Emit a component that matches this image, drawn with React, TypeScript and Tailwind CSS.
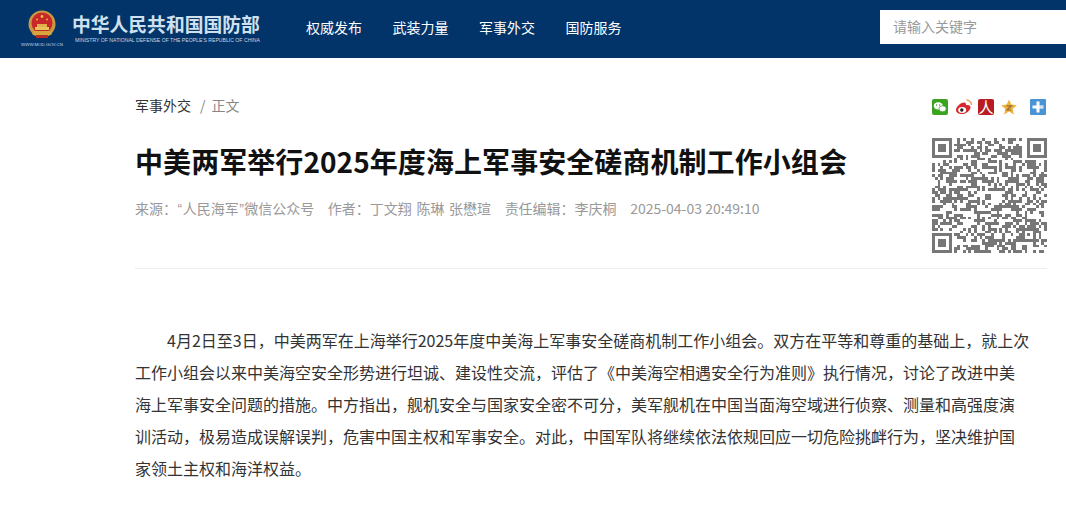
import React from "react"

const cjk = "font-['Noto_Sans_CJK_SC','Noto_Sans',sans-serif]"

const navItems = ["权威发布", "武装力量", "军事外交", "国防服务"]

// 41x41 modules, the three finders and the alignment box are fixed, the rest is filled from a seed
function qrCells() {
  const n = 41
  const cells: { x: number; y: number }[] = []
  let seed = 20250403
  const next = () => {
    seed = (seed * 1103515245 + 12345) & 0x7fffffff
    return (seed >> 16) & 1
  }
  const finder = (x: number, y: number, ox: number, oy: number) => {
    const a = x - ox
    const b = y - oy
    if (a < 0 || b < 0 || a > 7 || b > 7) return -1
    if (a === 7 || b === 7) return 0
    if (a === 0 || a === 6 || b === 0 || b === 6) return 1
    if (a === 1 || a === 5 || b === 1 || b === 5) return 0
    return 1
  }
  for (let y = 0; y < n; y++) {
    for (let x = 0; x < n; x++) {
      const v = next()
      let f = finder(x, y, 0, 0)
      if (f < 0 && x >= 33) f = x === 33 || y === 7 ? (y <= 7 ? 0 : -1) : y <= 6 ? finder(x - 34, y, 0, 0) : -1
      if (f < 0 && y >= 33 && x <= 7) f = y === 33 || x === 7 ? 0 : finder(x, y - 34, 0, 0)
      // alignment box
      if (x >= 32 && x <= 36 && y >= 32 && y <= 36) {
        const edge = x === 32 || x === 36 || y === 32 || y === 36
        f = edge || (x === 34 && y === 34) ? 1 : 0
      }
      // blank patch in the middle
      if (x >= 21 && x <= 24 && y >= 19 && y <= 22) f = 0
      if (f === 1 || (f < 0 && v === 1)) cells.push({ x, y })
    }
  }
  return cells
}

function QrCode() {
  return (
    <svg viewBox="0 0 41 41" className="w-[115px] h-[115px]" shapeRendering="crispEdges">
      {qrCells().map((c) => (
        <rect key={`${c.x}-${c.y}`} x={c.x} y={c.y} width="1" height="1" fill="#777777" />
      ))}
    </svg>
  )
}

function Emblem() {
  return (
    <svg viewBox="0 0 30 30" className="w-[30px] h-[30px]">
      <circle cx="15" cy="14" r="13.5" fill="#c9983f" />
      <circle cx="15" cy="13" r="10.5" fill="#c8282a" />
      <circle cx="15" cy="6.5" r="1.4" fill="#f0c040" />
      <circle cx="10" cy="9.5" r="0.9" fill="#f0c040" />
      <circle cx="20" cy="9.5" r="0.9" fill="#f0c040" />
      <path d="M8 17h14v3H8z" fill="#e9c25a" />
      <path d="M10 14h10v3H10z" fill="#e2b04a" />
      <path d="M5 24c3 3 17 3 20 0l-2-3H7z" fill="#d8a63e" />
      <path d="M9 25h12v3H9z" fill="#b92c24" />
    </svg>
  )
}

function ShareIcons() {
  return (
    <div className="flex items-center h-4 mr-[1px]">
      <svg viewBox="0 0 16 16" className="w-4 h-4">
        <rect width="16" height="16" rx="2" fill="#3aa320" />
        <ellipse cx="6.2" cy="6.8" rx="4.4" ry="3.6" fill="#fff" />
        <ellipse cx="10.6" cy="9.8" rx="3.6" ry="3" fill="#fff" stroke="#3aa320" strokeWidth="0.7" />
        <circle cx="4.6" cy="6" r="0.7" fill="#3aa320" />
        <circle cx="7.6" cy="6" r="0.7" fill="#3aa320" />
      </svg>
      <svg viewBox="0 0 18 16" className="w-[18px] h-4 ml-[7px]">
        <path d="M1 11c0-3 4.500-7.500 8-7.500 2 0 2.300 1.500 2 2.800 2.200-.6 4.500 0 4.500 1.900C15.500 11.500 11 15 7 15 3.500 15 1 13.500 1 11z" fill="#d9282d" />
        <ellipse cx="7.200" cy="11" rx="4" ry="2.900" fill="#fff" />
        <circle cx="6.800" cy="11" r="1.700" fill="#222" />
        <path d="M11.500 1c2.500 0 5 2.200 5 5" fill="none" stroke="#e6a15c" strokeWidth="1.500" />
      </svg>
      <span className="ml-[5px] w-4 h-4 rounded-[2px] bg-[#b81c22] text-white text-[15px] leading-4 text-center">
        人
      </span>
      <svg viewBox="0 0 16 16" className="w-4 h-4 ml-[7px]">
        <polygon points="8,0.500 10.300,5.600 15.800,6.200 11.700,9.900 12.900,15.400 8,12.600 3.100,15.400 4.300,9.900 0.200,6.200 5.700,5.600" fill="#eeb43c" />
        <path d="M5.500 6.800h5L6 11h4.500" fill="none" stroke="#9a6a3a" strokeWidth="1.200" />
      </svg>
      <svg viewBox="0 0 16 16" className="w-4 h-4 ml-[13px]">
        <rect width="16" height="16" rx="1" fill="#4a94d6" />
        <path d="M2.500 6.500h4V2.500h3v4h4v1.200h-4v.6h4v1.200h-4v4h-3v-4h-4z" fill="#fff" />
      </svg>
    </div>
  )
}

export default function App() {
  return (
    <div className={`w-[1066px] h-[509px] overflow-hidden bg-white ${cjk}`}>
      <header className="h-[58px] bg-[#02346a] flex items-center">
        <div className="w-[60px] ml-[12px] flex flex-col items-center">
          <Emblem />
          <span className="text-[4.4px] leading-[6px] mt-[2px] text-[#c8d6e4] font-['Liberation_Sans',sans-serif]">
            WWW.MOD.GOV.CN
          </span>
        </div>
        <div className="w-[190px] flex flex-col mb-[3px]">
          <span className="text-[18.8px] leading-[24px] font-bold text-[#cfe0ee] whitespace-nowrap">
            中华人民共和国国防部
          </span>
          <span className="text-[5.15px] leading-[8px] ml-[3px] text-[#c8d6e4] whitespace-nowrap font-['Liberation_Sans',sans-serif]">
            MINISTRY OF NATIONAL DEFENSE OF THE PEOPLE'S REPUBLIC OF CHINA
          </span>
        </div>
        <nav className="ml-[44px] mb-[4px] flex gap-[30.5px] text-[14px] text-white">
          {navItems.map((item) => (
            <a key={item} className="whitespace-nowrap">
              {item}
            </a>
          ))}
        </nav>
        <div className="ml-auto w-[186px] h-[34px] bg-white flex items-center pl-[13px] text-[14px] text-[#999999] mb-[5px]">
          请输入关键字
        </div>
      </header>

      <main className="w-[912px] ml-[135px]">
        <div className="flex justify-between border-b border-[#eeeeee] h-[211px]">
          <div className="flex flex-col">
            <div className="mt-[37px] text-[14px] leading-5 text-[#333333] flex">
              军事外交
              <span className="text-[#888888] ml-[9px]">/</span>
              <span className="text-[#888888] ml-[6px]">正文</span>
            </div>
            <h1 className="mt-[26px] text-[28px] leading-[40px] font-bold tracking-[0.07px] text-[#111111] whitespace-nowrap">
              中美两军举行2025年度海上军事安全磋商机制工作小组会
            </h1>
            <div className="mt-[17px] text-[14px] leading-5 text-[#999999] whitespace-nowrap flex gap-[13.5px]">
              <span>
                来源：<span className="mx-[0.5px] font-['Liberation_Sans',sans-serif]">“</span>人民海军
                <span className="mx-[0.5px] font-['Liberation_Sans',sans-serif]">”</span>微信公众号
              </span>
              <span className="[word-spacing:1.5px]">作者：丁文翔 陈琳 张懋瑄</span>
              <span>责任编辑：李庆桐</span>
              <span>2025-04-03 20:49:10</span>
            </div>
          </div>
          <div className="flex flex-col items-end">
            <div className="mt-[41px]">
              <ShareIcons />
            </div>
            <div className="mt-[23px]">
              <QrCode />
            </div>
          </div>
        </div>
        <p className="mt-[55px] pr-[17px] text-[16px] leading-[32px] text-[#333333] indent-[32px]">
          4月2日至3日，中美两军在上海举行2025年度中美海上军事安全磋商机制工作小组会。双方在平等和尊重的基础上，就上次工作小组会以来中美海空安全形势进行坦诚、建设性交流，评估了《中美海空相遇安全行为准则》执行情况，讨论了改进中美海上军事安全问题的措施。中方指出，舰机安全与国家安全密不可分，美军舰机在中国当面海空域进行侦察、测量和高强度演训活动，极易造成误解误判，危害中国主权和军事安全。对此，中国军队将继续依法依规回应一切危险挑衅行为，坚决维护国家领土主权和海洋权益。
        </p>
      </main>
    </div>
  )
}
